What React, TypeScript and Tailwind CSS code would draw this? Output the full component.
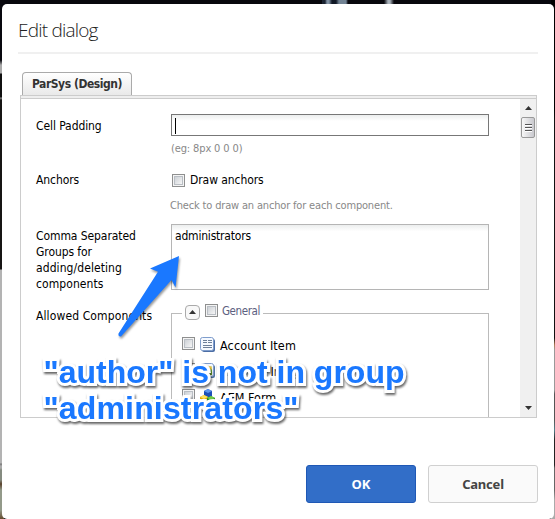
import type { ReactNode } from 'react';

function Check() {
  return (
    <span className="block size-[13px] shrink-0 border border-[#8e8f8f] bg-[#f4f4f4] p-px">
      <span className="block size-full border border-[#b9bec4] bg-linear-to-br from-[#cdd1d6] to-[#f6f6f6]" />
    </span>
  );
}

function DocIcon() {
  return (
    <svg width="16" height="16" viewBox="0 0 16 16" className="shrink-0">
      <rect x="2" y="2" width="13" height="13" rx="2" fill="#4c6ea5" />
      <rect x=".5" y=".5" width="13" height="13" rx="2" fill="#f5f9ff" stroke="#7f9dcc" />
      <path d="M3 3.5h4M3 5.5h4M8 3.5h4M8 5.5h4M3 8.5h9M3 10.5h9" stroke="#6d7f99" />
    </svg>
  );
}

function ImageIcon() {
  return (
    <svg width="16" height="16" viewBox="0 0 16 16" className="shrink-0">
      <rect x="2" y="2" width="13" height="13" rx="2" fill="#52749f" />
      <rect x=".5" y=".5" width="13" height="13" rx="2" fill="#f5f9ff" stroke="#7f9dcc" />
      <path d="M3 3h9v9H3z" fill="#b9dcf0" />
      <path d="M3 12l3-5 3 3 3-5v7z" fill="#6fae35" />
      <circle cx="10" cy="5" r="2" fill="#f2ce45" />
    </svg>
  );
}

function CubesIcon() {
  return (
    <svg width="16" height="16" viewBox="0 0 16 16" className="shrink-0">
      <path d="M4 2l4-2 4 2v5L8 9 4 7z" fill="#1c4fb8" />
      <path d="M4 2l4-2 4 2-4 2z" fill="#5d96ee" />
      <path d="M0 8l4-2 4 2v5l-4 2-4-2z" fill="#e0a600" />
      <path d="M0 8l4-2 4 2-4 2z" fill="#ffe25a" />
      <path d="M7 9l4-2 4 2v4l-4 2-4-2z" fill="#24891d" />
      <path d="M7 9l4-2 4 2-4 2z" fill="#6fca48" />
    </svg>
  );
}

function Item({ icon, children }: { icon: ReactNode; children: ReactNode }) {
  return (
    <div className="flex h-[26px] items-start whitespace-nowrap">
      <Check />
      <span className="ml-[5px]">{icon}</span>
      <span className="ml-1 text-[12.5px] leading-[18px]">{children}</span>
    </div>
  );
}

function Field({ label, className, children }: { label: ReactNode; className: string; children: ReactNode }) {
  return (
    <div className={`flex ${className}`}>
      <div className="w-[135px] shrink-0 whitespace-nowrap tracking-[-0.08px]">{label}</div>
      <div className="w-[318px]">{children}</div>
    </div>
  );
}

function ScrollBar() {
  return (
    <div className="flex w-4 shrink-0 flex-col items-center justify-between bg-[#f0f0f0] pt-[7px] pb-[7px]">
      <div className="flex flex-col items-center">
        <svg width="7" height="4"><path d="M0 4L3.5 0 7 4z" fill="#333" /></svg>
        <div className="mt-[7px] flex h-[21px] w-[14px] flex-col items-center justify-center gap-px rounded-[2px] border border-[#999] bg-linear-to-r from-[#f7f7f7] to-[#c9c9ce]">
          <span className="h-[2px] w-[7px] border-b border-white bg-[#555]" />
          <span className="h-[2px] w-[7px] border-b border-white bg-[#555]" />
          <span className="h-[2px] w-[7px] border-b border-white bg-[#555]" />
        </div>
      </div>
      <svg width="7" height="4"><path d="M0 0h7L3.5 4z" fill="#333" /></svg>
    </div>
  );
}

export default function App() {
  return (
    <div className="relative h-[519px] w-[555px] overflow-hidden bg-[#07070d] bg-[linear-gradient(#08080e_0_60px,#aaa_65px_73px,#101010_74px_97px,#888_98px,#171514_100px_269px,#b3b3b3_270px_463px,#777_464px,#aaa_466px_468px,#858b80_470px_480px,#5a422c_484px,#939a8a_490px_510px,#644a2d_519px)] bg-size-[4px_519px] bg-no-repeat pt-1 pr-px pl-[2px] text-[12px] leading-4 text-black [font-family:'DejaVu_Sans_Condensed','DejaVu_Sans',sans-serif] [font-stretch:condensed]">
      <div className="absolute top-0 right-0 h-[519px] w-1 bg-[linear-gradient(#000_0_110px,#111_120px_338px,#b07b56_345px,#999_350px_390px,#555_394px_420px,#54808a_430px,#222_440px_465px,#666_468px_490px,#aaa_500px)]" />
      <div className="absolute top-0 left-[322px] h-1 w-[72px] bg-[linear-gradient(90deg,#1a2230_0_3px,#8191a3_5px_7px,#101825_10px_14px,#728394_17px_24px,#07070d_26px_62px,#a9b2bb_66px_68px,#07070d_72px)]" />
      <div className="relative h-[515px] rounded-[5px] bg-white">
        <h1 className="mx-4 flex h-[50px] items-center border-b-2 border-[#f0f0f0] pt-[3px] text-[19px] font-light tracking-[-0.8px] text-[#222] [font-family:'Open_Sans','Noto_Sans',sans-serif] [font-stretch:88%]">
          <span className="whitespace-nowrap">Edit dialog</span>
        </h1>
        <div className="mt-[18px] ml-[20px] flex">
          <div className="h-[23px] w-[110px] rounded-t-[4px] border border-b-0 border-[#aaa] bg-linear-to-b from-white to-[#e9e9e9] pt-[3px] text-center text-[12px] font-bold whitespace-nowrap text-[#333] tracking-[-0.45px]">
            ParSys (Design)
          </div>
        </div>
        <div className="ml-[18px] flex h-[323px] w-[517px] flex-col border border-[#ccc]">
          <div className="h-[3px] shrink-0 border-b border-[#ccc] bg-[#eee]" />
          <div className="flex min-h-0 grow">
            <div className="min-w-0 grow overflow-hidden pt-[15px] pl-[15px]">
              <Field label={<div className="pt-1">Cell Padding</div>} className="h-[58px]">
                <div className="h-[22px] border border-[#777] bg-linear-to-b from-[#eceeee] via-white via-30% to-white pt-[3px] pl-[3px]">
                  <div className="h-4 w-px bg-black" />
                </div>
                <div className="mt-[5px] text-[11px] tracking-[-0.13px] text-[#888]">(eg: 8px 0 0 0)</div>
              </Field>
              <Field label="Anchors" className="h-[52px]">
                <div className="flex items-center gap-[5px] pl-px tracking-[-0.08px]">
                  <Check />
                  <span className="leading-[17px]">Draw anchors</span>
                </div>
                <div className="mt-[9px] -ml-px text-[11px] whitespace-nowrap tracking-[-0.17px] text-[#888]">Check to draw an anchor for each component.</div>
              </Field>
              <Field
                label={<div className="pt-1">Comma Separated<br />Groups for<br /><span className="tracking-[0.08px]">adding/deleting</span><br /><span className="tracking-[0.08px]">components</span></div>}
                className="h-[80px]"
              >
                <div className="h-[66px] border border-[#b5b5b5] bg-linear-to-b from-[#eceeee] via-white via-10% to-white pt-[3px] pl-[3px] tracking-[-0.2px]">
                  administrators
                </div>
              </Field>
              <Field label={<div className="pt-1 tracking-[0.12px]">Allowed Components</div>} className="h-[120px]">
                <div className="flex h-4 items-center">
                  <span className="mt-[9px] h-[7px] w-[11px] self-start border-t border-l border-[#bbb]" />
                  <span className="ml-[3px] flex size-[15px] items-center justify-center rounded-[4px] border border-[#aaa] bg-[#f8f8f8]">
                    <svg width="7" height="4"><path d="M0 4L3.5 0 7 4z" fill="#333" /></svg>
                  </span>
                  <span className="ml-[5px] -mt-[3px]"><Check /></span>
                  <span className="-mt-[2px] ml-1 w-[37px] text-[11.5px] whitespace-nowrap tracking-[-0.4px] text-[#5c6080]">General</span>
                  <span className="mt-[9px] ml-1 h-[7px] grow self-start border-t border-r border-[#bbb]" />
                </div>
                <div className="h-[104px] border-x border-[#bbb] pt-[17px] pl-[10px]">
                  <Item icon={<DocIcon />}><span className="tracking-[0.12px]">Account Item</span></Item>
                  <Item icon={<ImageIcon />}><span className="tracking-[-0.3px]">Adaptive Image</span></Item>
                  <Item icon={<CubesIcon />}>AEM Form</Item>
                </div>
              </Field>
            </div>
            <ScrollBar />
          </div>
        </div>
        <div className="mt-[47px] mr-[16px] flex justify-end gap-3 text-[13px] font-bold [font-family:'Noto_Sans',sans-serif]">
          <button className="h-[38px] w-[110px] rounded-[3px] border border-[#1f58b5] bg-[#326ec8] text-white">OK</button>
          <button className="h-[38px] w-[110px] rounded-[3px] border border-[#d0d0d0] bg-[#fafafa] text-[#444] tracking-[-0.2px]">Cancel</button>
        </div>
      </div>
      <svg className="absolute top-[248px] left-[110px] drop-shadow-[1px_2px_1px_rgba(0,0,0,0.4)]" width="80" height="96" viewBox="110 248 80 96">
        <path d="M179 256L150 268.5 158 271.7 118.5 333.5Q118 337 121 336.5L171.5 280 175.5 287.5z" fill="#1a78ff" />
      </svg>
      <div className="absolute top-[354px] left-[43.5px] text-[32px] leading-9 font-bold whitespace-nowrap text-[#1a78ff] drop-shadow-[1px_2px_1px_rgba(0,0,0,0.6)] [-webkit-text-stroke:6px_white] [font-family:'Liberation_Sans',Arial,sans-serif] [paint-order:stroke_fill] [stroke-linejoin:round]">
        "author" is not in group<br /><span className="tracking-[0.16px]">"administrators"</span>
      </div>
    </div>
  );
}
